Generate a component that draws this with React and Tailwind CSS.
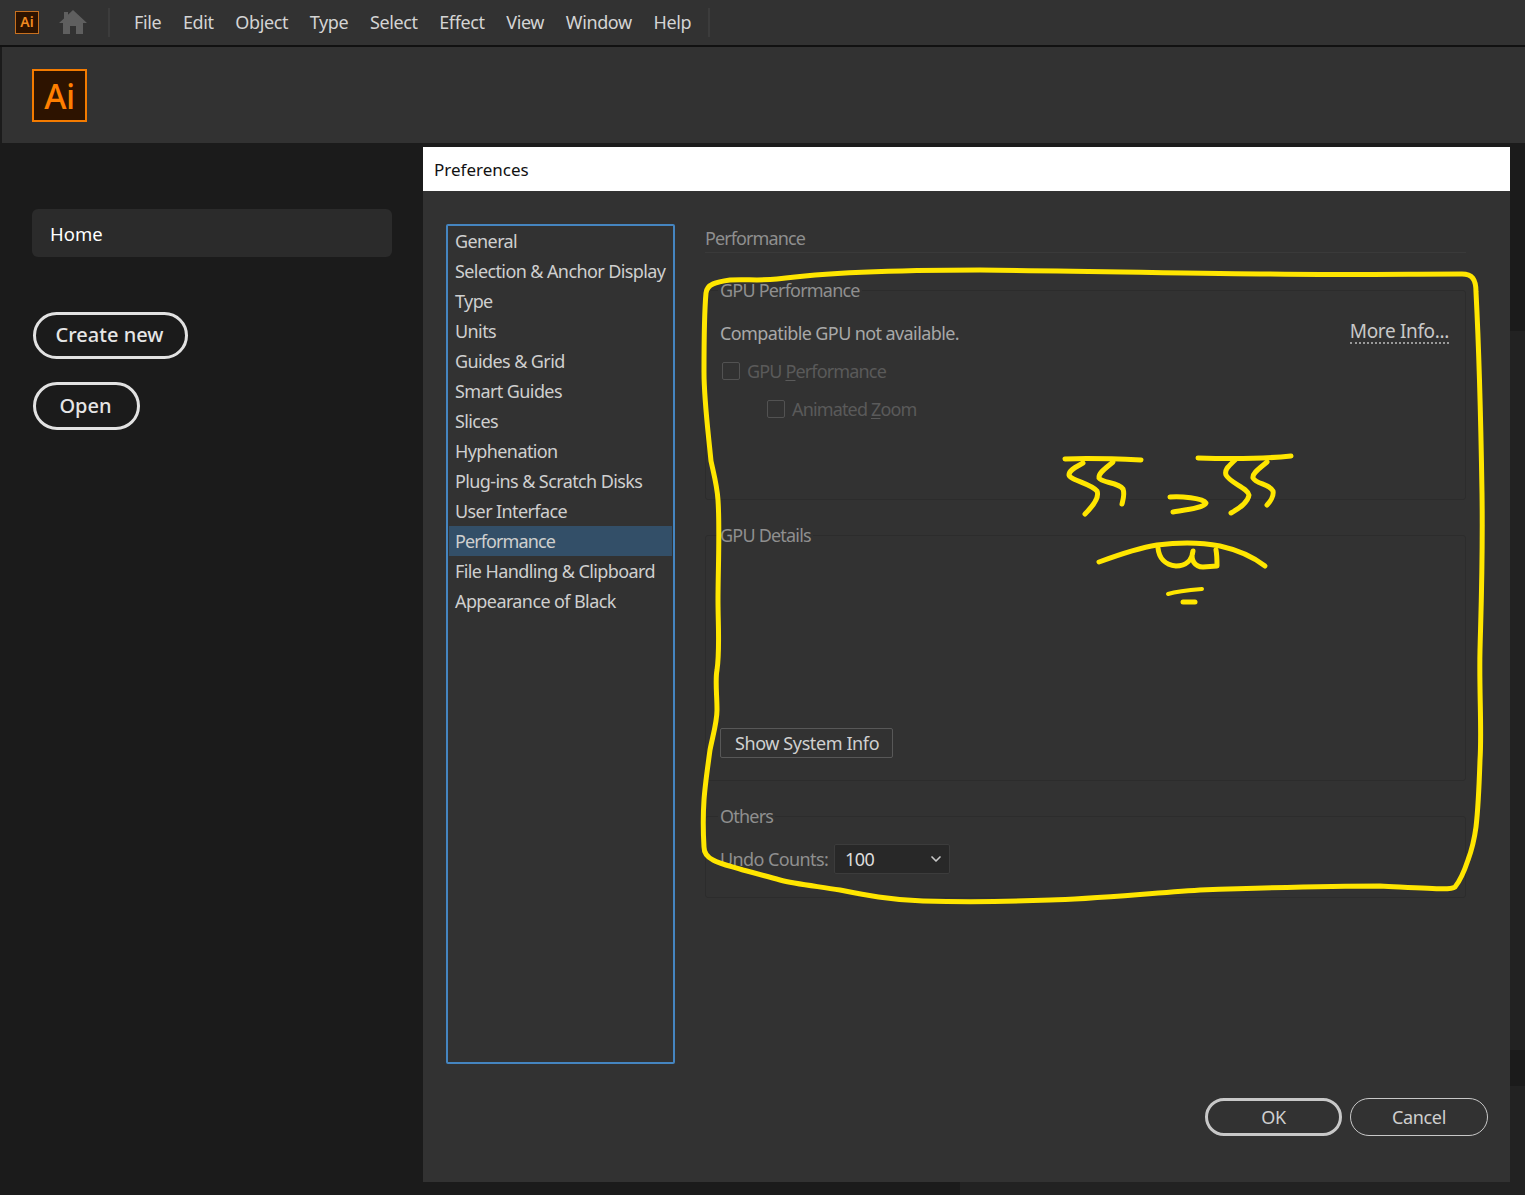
import React from "react";
import { ChevronDown } from "lucide-react";

const menus = ["File", "Edit", "Object", "Type", "Select", "Effect", "View", "Window", "Help"];

const prefs = [
  "General",
  "Selection & Anchor Display",
  "Type",
  "Units",
  "Guides & Grid",
  "Smart Guides",
  "Slices",
  "Hyphenation",
  "Plug-ins & Scratch Disks",
  "User Interface",
  "Performance",
  "File Handling & Clipboard",
  "Appearance of Black",
];

function Group({ title, className, children }) {
  return (
    <fieldset className={`border border-[#2c2c2c] rounded-[3px] ${className}`}>
      <legend className="-ml-[2px] px-[2px] text-[18px] leading-[24px] tracking-[-0.8px] text-[#8f8f8f]">
        {title}
      </legend>
      {children}
    </fieldset>
  );
}

function Scribble() {
  return (
    <svg
      className="absolute left-0 top-0 pointer-events-none"
      width="1525"
      height="1195"
      viewBox="0 0 1525 1195"
      fill="none"
      stroke="#ffe600"
      strokeWidth="5"
      strokeLinecap="round"
      strokeLinejoin="round"
    >
      <path d="M706 293C707 284 716 282 730 280C745 279 760 281 777 279C830 272 900 270 980 270C1100 271 1200 274 1270 274C1340 275 1410 274 1462 274C1472 274 1476 279 1476 292C1479 350 1481 430 1482 493C1483 560 1481 610 1480 650C1479 690 1482 730 1480 760C1479 790 1478 810 1476 827C1474 842 1471 852 1468 860C1464 872 1459 882 1455 887C1451 890 1440 889 1380 886C1320 886 1260 888 1200 890C1140 894 1090 899 1050 900C1000 902 960 902 923 901C890 900 865 895 840 890C815 886 795 884 780 880C765 876 755 873 743 870C730 866 720 864 713 860C707 857 704 853 704 847C703 830 703 815 704 800C705 785 708 765 710 750C713 735 717 722 717 710C717 695 715 680 717 670C720 650 718 625 718 600C718 570 720 530 718 500C717 485 714 475 711 461C708 430 704 400 704 372C704 340 704 315 706 293Z" />
      <path d="M1065 459C1090 458 1118 459 1141 460" />
      <path d="M1083 463C1076 467 1069 470 1069 475C1070 480 1092 484 1097 491C1100 498 1091 508 1085 514" />
      <path d="M1113 462C1106 468 1098 473 1099 478C1102 483 1118 482 1123 489C1125 494 1123 500 1122 504" />
      <path d="M1170 497C1180 496 1203 498 1206 503C1204 508 1185 510 1173 512" />
      <path d="M1198 458C1230 459 1262 459 1291 456" />
      <path d="M1235 460C1230 465 1224 469 1226 475C1230 483 1248 488 1249 495C1248 503 1238 509 1231 513" />
      <path d="M1267 462C1260 468 1252 473 1253 478C1256 484 1270 484 1273 491C1274 496 1270 502 1267 505" />
      <path d="M1099 562C1118 555 1138 548 1157 545C1180 542 1200 542 1220 546C1238 550 1252 556 1265 566" />
      <path d="M1158 548C1159 558 1165 565 1176 566C1186 566 1192 560 1193 551C1190 560 1195 567 1203 567L1217 566C1217 560 1217 555 1216 550" />
      <path d="M1168 594C1178 591 1190 590 1202 589" strokeWidth="4" />
      <path d="M1183 602L1195 602" strokeWidth="5" />
    </svg>
  );
}

export default function App() {
  return (
    <div className="relative w-[1525px] h-[1195px] overflow-hidden flex flex-col bg-[#1b1b1b] font-['Noto_Sans',sans-serif]">
      {/* menu bar */}
      <div className="h-[47px] flex items-center bg-[#323232] border-b-2 border-[#111111] pb-[1px]">
        <div className="ml-[15px] w-[24px] h-[23px] border border-[#c8701f] bg-[#2d1300] flex items-center justify-center text-[#f08a20] text-[14px] font-semibold leading-none">
          Ai
        </div>
        <svg className="ml-[20px] w-[28px] h-[24px]" viewBox="0 0 28 24" fill="#5f5f5f">
          <path d="M14 0L28 13H24V24H17V16H11V24H4V13H0L5 8.4V2H9V4.7Z" />
        </svg>
        <div className="ml-[21px] w-[2px] h-[29px] bg-[#3c3c3c]" />
        <div className="ml-[24px] flex gap-[21.75px] text-[18px] tracking-[-0.4px] text-[#d4d4d4]">
          {menus.map((m) => (
            <span key={m}>{m}</span>
          ))}
        </div>
        <div className="ml-[17px] w-[2px] h-[29px] bg-[#3c3c3c]" />
      </div>

      {/* logo bar */}
      <div className="h-[96px] flex items-center bg-[#323232] border-l-2 border-[#1b1b1b] pl-[30px] pt-[1px]">
        <div className="w-[55px] h-[53px] border-2 border-[#f47b00] bg-[#2d1300] flex items-center justify-center text-[#ff7f00] text-[34px] font-medium tracking-[-0.5px] leading-none">
          Ai
        </div>
      </div>

      <div className="flex-1 flex">
        {/* home sidebar */}
        <div className="w-[423px] pt-[66px] pl-[32px]">
          <div className="w-[360px] h-[48px] rounded-md bg-[#2b2b2b] flex items-center pl-[18px] pt-[2px] text-[18.5px] text-white">
            Home
          </div>
          <div className="mt-[55px] ml-[1px] w-[155px] h-[47px] pb-[2px] rounded-full border-[3px] border-[#e2e2e2] flex items-center justify-center text-[20px] font-medium text-[#e6e6e6]">
            <span className="-ml-[2px]">Create new</span>
          </div>
          <div className="mt-[23px] ml-[1px] w-[107px] h-[48px] rounded-full border-[3px] border-[#e2e2e2] flex items-center justify-center text-[20px] font-medium text-[#e6e6e6]">
            <span className="-ml-[2px]">Open</span>
          </div>
        </div>

        <div className="w-[1087px] pt-[4px] flex flex-col">
          {/* preferences dialog */}
          <div className="h-[1035px] bg-[#323232]">
            <div className="h-[44px] bg-white flex items-center pl-[11px] pt-[2px] text-[17px] text-[#111111]">
              Preferences
            </div>
            <div className="flex pt-[33px] pl-[23px]">
              <div className="w-[229px] h-[840px] border-2 border-[#4585c0] rounded-[2px] px-[1px] text-[18px] text-[#cfcfcf]">
                {prefs.map((p) => (
                  <div
                    key={p}
                    className={`h-[30px] leading-[30px] pl-[6px] whitespace-nowrap ${
                      p === "Performance" ? "bg-[#334f68] tracking-[-0.9px]" : "tracking-[-0.6px]"
                    }`}
                  >
                    {p}
                  </div>
                ))}
              </div>

              <div className="ml-[30px] w-[761px] text-[18px] tracking-[-0.6px]">
                <div className="h-[29px] pt-[2px] leading-[24px] tracking-[-0.9px] text-[#8f8f8f] border-b border-[#3a3a3a]">
                  Performance
                </div>

                <Group title="GPU Performance" className="mt-[25px] h-[222px] px-[14px]">
                  <div className="mt-[19px] flex justify-between leading-[24px]">
                    <span className="text-[#a8a8a8]">Compatible GPU not available.</span>
                    <span className="mr-[2px] -mt-[2px] h-[25px] text-[19px] tracking-[-0.35px] text-[#c8c8c8] border-b-2 border-dotted border-[#9a9a9a]">
                      More Info...
                    </span>
                  </div>
                  <div className="mt-[14px] ml-[2px] flex items-center gap-[7px] leading-[24px] tracking-[-0.85px] text-[#5a5a5a]">
                    <span className="w-[18px] h-[18px] border border-[#525252] rounded-[2px]" />
                    <span>
                      GPU <span className="underline underline-offset-2">P</span>erformance
                    </span>
                  </div>
                  <div className="mt-[14px] ml-[47px] flex items-center gap-[7px] leading-[24px] tracking-[-0.85px] text-[#5a5a5a]">
                    <span className="w-[18px] h-[18px] border border-[#525252] rounded-[2px]" />
                    <span>
                      Animated <span className="underline underline-offset-2">Z</span>oom
                    </span>
                  </div>
                </Group>

                <Group title="GPU Details" className="mt-[23px] h-[258px] px-[14px]">
                  <div className="mt-[181px] w-[173px] h-[30px] border border-[#585858] rounded-[2px] flex items-center pl-[14px] tracking-[-0.4px] text-[#d0d0d0]">
                    Show System Info
                  </div>
                </Group>

                <Group title="Others" className="mt-[23px] h-[94px] px-[14px]">
                  <div className="mt-[16px] flex items-center">
                    <span className="w-[114px] text-[#8f8f8f] leading-[24px]">Undo Counts:</span>
                    <div className="w-[116px] h-[30px] rounded-[2px] bg-[#282828] border border-[#3c3c3c] flex items-center justify-between pl-[10px] pr-[5px] text-[#dddddd]">
                      <span>100</span>
                      <ChevronDown size={16} strokeWidth={2.5} className="text-[#c8c8c8]" />
                    </div>
                  </div>
                </Group>
              </div>
            </div>

            <div className="mt-[34px] flex justify-end gap-[8px] pr-[22px] text-[18px] tracking-[-0.35px] text-[#cfcfcf]">
              <div className="w-[137px] h-[38px] rounded-full border-[3px] border-[#c8c8c8] flex items-center justify-center">
                OK
              </div>
              <div className="w-[138px] h-[38px] rounded-full border-[1.5px] border-[#c8c8c8] flex items-center justify-center">
                Cancel
              </div>
            </div>
          </div>

          <div className="flex-1 flex">
            <div className="w-[537px] bg-[#1b1b1b]" />
            <div className="flex-1 bg-[#222222]" />
          </div>
        </div>

        {/* what shows behind the dialog on the right */}
        <div className="flex-1 flex flex-col bg-[#222222]">
          <div className="h-[188px] bg-[#1b1b1b]" />
          <div className="mt-[719px] h-[36px] bg-[#1b1b1b]" />
        </div>
      </div>

      <Scribble />
    </div>
  );
}
